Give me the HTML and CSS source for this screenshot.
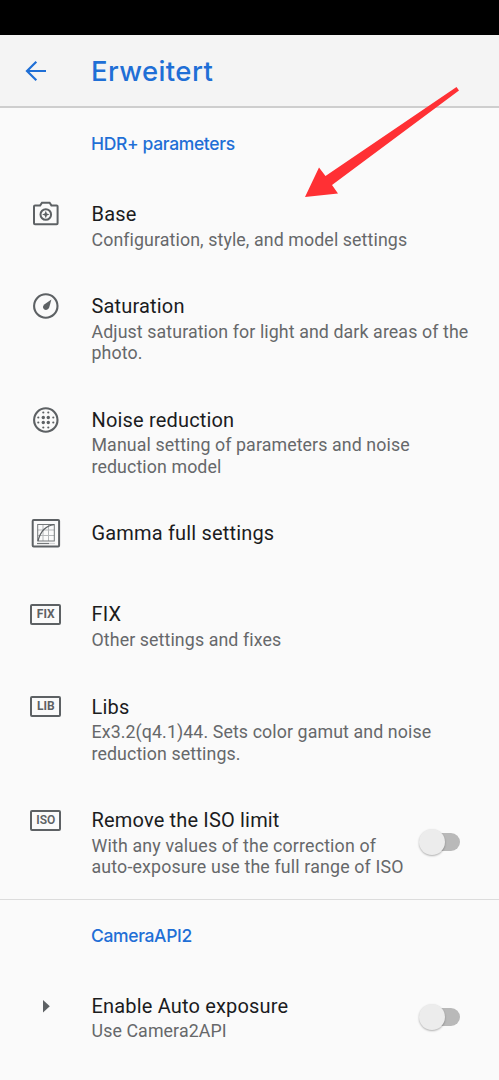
FILE: index.html
```
<!DOCTYPE html>
<html lang="en">
<head>
<meta charset="utf-8">
<title>Erweitert</title>
<link rel="stylesheet" href="styles.css">
</head>
<body>
<div class="screen">
  <div class="status"></div>
  <header class="toolbar">
    <svg class="back" width="24" height="24" viewBox="0 0 24 24"><path d="M12.300 2.700L3 12l9.300 9.300M3 12h19" fill="none" stroke="#1f6fd6" stroke-width="2.200"/></svg>
    <h1 class="heading">Erweitert</h1>
  </header>
  <main>
    <section class="group">
      <h2 class="category">HDR+ parameters</h2>
      <div class="row">
        <div class="icon"><svg width="32" height="32" viewBox="0 0 32 32" fill="none" stroke="#5d6164" stroke-width="2"><path d="M5 7.400h5.200l1.800-2.600h7.600l1.800 2.600H26.600a1 1 0 0 1 1 1V25.200a1 1 0 0 1-1 1H5a1 1 0 0 1-1-1V8.400a1 1 0 0 1 1-1z"/><circle cx="15.800" cy="16.500" r="5.300"/><path d="M15.800 12.800l1.100 2.600 2.600 1.100-2.600 1.100-1.100 2.600-1.100-2.600-2.600-1.100 2.600-1.100z" fill="#5d6164" stroke="none"/></svg></div>
        <div class="text"><div class="title">Base</div><div class="summary">Configuration, style, and model settings</div></div>
      </div>
      <div class="row two">
        <div class="icon"><svg width="32" height="32" viewBox="0 0 32 32" fill="none" stroke="#5d6164"><circle cx="15.800" cy="16" r="11.700" stroke-width="2.100"/><path d="M21.400 9.600l-2.200 7.800c-.9 2.500-3.600 3.200-5.200 1.800s-1.300-3.500.6-4.900z" fill="#5d6164" stroke="none"/></svg></div>
        <div class="text"><div class="title">Saturation</div><div class="summary">Adjust saturation for light and dark areas of the<br>photo.</div></div>
      </div>
      <div class="row two">
        <div class="icon"><svg width="32" height="32" viewBox="0 0 32 32" fill="#5d6164"><circle cx="15.800" cy="16" r="11.700" fill="none" stroke="#5d6164" stroke-width="2.100"/><g><circle cx="13.300" cy="13.500" r="1.700"/><circle cx="18.300" cy="13.500" r="1.700"/><circle cx="13.300" cy="18.500" r="1.700"/><circle cx="18.300" cy="18.500" r="1.700"/><circle cx="13.300" cy="8.500" r="1.100"/><circle cx="18.300" cy="8.500" r="1.100"/><circle cx="13.300" cy="23.500" r="1.100"/><circle cx="18.300" cy="23.500" r="1.100"/><circle cx="8.300" cy="13.500" r="1.100"/><circle cx="8.300" cy="18.500" r="1.100"/><circle cx="23.300" cy="13.500" r="1.100"/><circle cx="23.300" cy="18.500" r="1.100"/></g></svg></div>
        <div class="text"><div class="title">Noise reduction</div><div class="summary">Manual setting of parameters and noise<br>reduction model</div></div>
      </div>
      <div class="row single">
        <div class="icon"><svg width="32" height="32" viewBox="0 0 32 32" fill="none"><rect x="2.700" y="3" width="26.400" height="26.600" rx="1" stroke="#5d6164" stroke-width="2"/><path d="M7.700 13h16.600M7.700 18.500h16.600M13 7.500V24M18.500 7.500V24" stroke="#b5b8ba"/><rect x="7.700" y="7.500" width="16.600" height="16.500" stroke="#74787a"/><path d="M8 24C10 16 14 9 24 7.700" stroke="#5d6164" stroke-width="1.300"/><path d="M7 26.500h12" stroke="#74787a" stroke-width="1.200"/><path d="M19 26.500h6" stroke="#d4d5d6" stroke-width="1.200"/></svg></div>
        <div class="text"><div class="title">Gamma full settings</div></div>
      </div>
      <div class="row">
        <div class="icon"><span class="badge">FIX</span></div>
        <div class="text"><div class="title">FIX</div><div class="summary">Other settings and fixes</div></div>
      </div>
      <div class="row two">
        <div class="icon"><span class="badge">LIB</span></div>
        <div class="text"><div class="title">Libs</div><div class="summary">Ex3.2(q4.1)44. Sets color gamut and noise<br>reduction settings.</div></div>
      </div>
      <div class="row two">
        <div class="icon"><span class="badge iso">ISO</span></div>
        <div class="text"><div class="title">Remove the ISO limit</div><div class="summary wide">With any values of the correction of<br>auto-exposure use the full range of ISO</div></div>
        <div class="switch low"><div class="thumb"></div></div>
      </div>
    </section>
    <section class="group">
      <h2 class="category">CameraAPI2</h2>
      <div class="row">
        <div class="icon"><svg width="32" height="32" viewBox="0 0 32 32"><path d="M13 10v12.400l6.800-6.200z" fill="#5d6164"/></svg></div>
        <div class="text"><div class="title">Enable Auto exposure</div><div class="summary">Use Camera2API</div></div>
        <div class="switch"><div class="thumb"></div></div>
      </div>
    </section>
  </main>
  <svg class="arrow" width="160" height="116" viewBox="300 84 160 116"><path d="M456.500 87l2.500 3.500L332 185l6 8.500-33 3.500 14-29.500 6.500 8.500z" fill="#ff3034"/></svg>
</div>
</body>
</html>
```
FILE: styles.css
```
* { box-sizing: border-box; }
body { margin: 0; background: #fafafa; font-family: Roboto, sans-serif; }
.screen { position: relative; width: 499px; height: 1080px; overflow: hidden; }
.status { height: 35px; background: #000; }
.toolbar {
  display: flex;
  align-items: center;
  height: 73px;
  padding-left: 24px;
  background: #f4f4f4;
  border-bottom: 2px solid #cecece;
}
.back { flex: none; }
.heading {
  margin: 1px 0 0 43px;
  color: #1f6fd6;
  font: 500 27.500px/36px Inter, sans-serif;
  letter-spacing: .4px;
}
.category {
  height: 71px;
  margin: 0;
  padding: 24px 0 0 91px;
  color: #1f6fd6;
  font: 500 17.500px/24px Inter, sans-serif;
  letter-spacing: -.35px;
}
.row { display: flex; height: 92.3px; padding-top: 23px; }
.two { height: 113.6px; }
.single { height: 81px; }
.icon {
  display: flex;
  flex: none;
  justify-content: center;
  align-items: center;
  width: 91.500px;
  height: 24px;
}
.icon svg { flex: none; }
.text { flex: 1; white-space: nowrap; }
.title {
  height: 26.500px;
  color: #1b1c1e;
  font-size: 20px;
  line-height: 24px;
  letter-spacing: .17px;
}
.summary {
  color: #66686a;
  font-size: 17.800px;
  line-height: 21.300px;
  letter-spacing: .1px;
}
.wide { letter-spacing: .16px; }
.badge {
  width: 31px;
  height: 21px;
  border: 2px solid #5d6164;
  border-radius: 2px;
  color: #5d6164;
  font-size: 12px;
  font-weight: 700;
  line-height: 17px;
  text-align: center;
}
.iso { font-weight: 600; }
.group + .group { border-top: 1px solid #dcdcdc; }
.switch {
  flex: none;
  width: 36px;
  height: 18px;
  margin: 14px 39.500px 0 0;
  border-radius: 9px;
  background: #b9b9b9;
}
.low { margin-top: 25px; }
.thumb {
  width: 26px;
  height: 26px;
  margin: -4px 0 0 -5px;
  border-radius: 50%;
  background: #ececec;
  box-shadow: 0 1px 2px rgba(0, 0, 0, .3);
}
.arrow { position: absolute; left: 300px; top: 84px; }
```
